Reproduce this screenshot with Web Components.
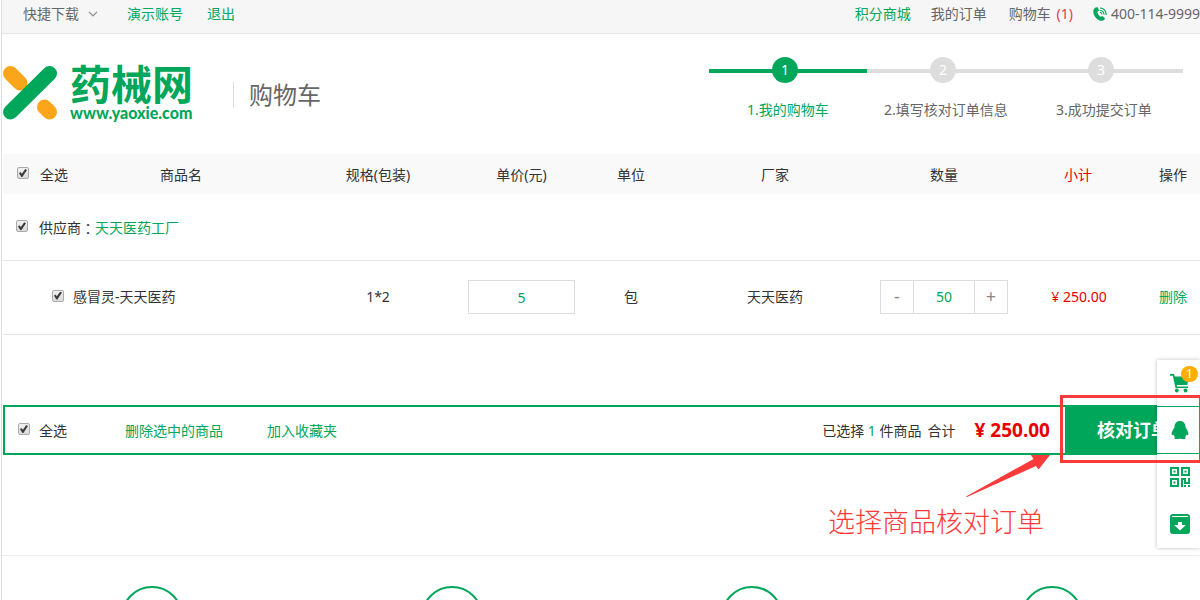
<!DOCTYPE html>
<html lang="zh-CN">
<head>
<meta charset="utf-8">
<title>购物车 - 药械网</title>
<style>
  html { --green: #00a65a; --red: #e60000; --line: #e6e6e6; --mark: #fb3a3a; }
  body {
    margin: 0; background: #fff; color: #333;
    font: 14px/20px "Noto Sans", "Noto Sans CJK SC", sans-serif;
  }
</style>
</head>
<body>
<shop-page>
  <top-bar></top-bar>
  <page-header>
    <step-tracker>
      <step-item index="1" active>1.我的购物车</step-item>
      <step-item index="2">2.填写核对订单信息</step-item>
      <step-item index="3">3.成功提交订单</step-item>
    </step-tracker>
  </page-header>
  <cart-table></cart-table>
  <checkout-bar></checkout-bar>
  <service-row></service-row>
  <side-rail slot="overlay"></side-rail>
  <guide-mark slot="overlay">选择商品核对订单</guide-mark>
</shop-page>

<script>
const base = `
  :host, *, *::before, *::after { box-sizing: border-box; }
  a { color: var(--green); text-decoration: none; }
  button, input { font: inherit; margin: 0; }
  input[type=checkbox] {
    appearance: none; flex: none; width: 12px; height: 12px; margin: 0 0 3px;
    border: 1px solid #aaa; border-radius: 2px;
    background: linear-gradient(#f2f2f2, #dadada); display: inline-grid; place-items: center;
  }
  input[type=checkbox]:checked::after {
    content: ""; width: 8px; height: 8px; background: #3c3c3c;
    clip-path: polygon(0 52%, 16% 38%, 36% 58%, 78% 0, 100% 12%, 42% 100%, 30% 100%);
  }
`;
function define(name, css, html, setup) {
  const template = document.createElement('template');
  template.innerHTML = `<style>${base}${css}</style>${html}`;
  customElements.define(name, class extends HTMLElement {
    constructor() {
      super();
      this.attachShadow({ mode: 'open' }).append(template.content.cloneNode(true));
    }
    connectedCallback() { if (setup) setup(this, this.shadowRoot); }
  });
}

define('shop-page', `
  :host { display: block; position: relative; height: 100vh; overflow: hidden; margin-left: 1px; border-left: 1px solid #e0e0e0; }
`, `<main><slot></slot></main><slot name="overlay"></slot>`);

define('top-bar', `
  :host { display: block; background: #f6f6f6; border-bottom: 1px solid var(--line); }
  nav { display: flex; height: 33px; padding: 0 0 5px 21px; align-items: center; white-space: nowrap; color: #666; }
  a.plain { color: #666; }
  .menu { display: flex; align-items: center; gap: 9px; margin-right: 29px; background: none; border: 0; padding: 0; color: #666; }
  .out { margin-left: 24px; }
  .right { margin-left: auto; display: flex; align-items: center; gap: 20px; }
  .cart { margin-left: 2px; }
  .count { margin-left: 2px; color: #e8394a; }
  .tel { display: flex; align-items: center; gap: 4px; }
`, `
  <nav>
    <button class="menu" type="button">快捷下载
      <svg width="10" height="6" viewBox="0 0 10 6" fill="none" stroke="#888" stroke-width="1.2"><path d="M1 .8 5 4.8 9 .8"/></svg>
    </button>
    <a href="#account">演示账号</a>
    <a class="out" href="#logout">退出</a>
    <div class="right">
      <a href="#points">积分商城</a>
      <a class="plain" href="#orders">我的订单</a>
      <a class="plain cart" href="#cart">购物车 <span class="count">(1)</span></a>
      <span class="tel">
        <svg width="14" height="14" viewBox="0 0 14 14"><path fill="#00a65a" d="M2.6.5 4.8.2 6 3.6 4.4 5C4.8 7 6 8.800 7.600 9.800L9.400 8.900 12 11.200 11.200 13C9.500 14 7.800 14 6.200 13.200 2.800 11.400.4 8 .3 4.400.3 2.600 1.200 1.200 2.600.5Z"/><g fill="none" stroke="#00a65a" stroke-width="1.100"><path d="M7 1A6 6 0 0 1 13 8M7 3.200A4 4 0 0 1 10.900 7.600M6.900 5.300A2 2 0 0 1 8.800 7.400"/></g></svg>
        400-114-9999
      </span>
    </div>
  </nav>
`);

define('page-header', `
  :host { display: flex; height: 120px; align-items: flex-start; justify-content: space-between; padding: 0 17px 0 1px; white-space: nowrap; }
  .brand { display: flex; align-items: flex-start; padding-top: 32px; color: var(--green); }
  .words { display: block; margin-left: 13px; width: 123px; }
  .name { display: block; font-size: 41px; line-height: 36px; font-weight: 700; }
  .url { display: block; font: 900 16px/22px Lato, sans-serif; }
  h1 { margin: 16px 0 0 40px; padding-left: 15px; font-size: 24px; line-height: 26px; font-weight: 400; color: #666; border-left: 1px solid #ddd; }
`, `
  <div class="brand">
    <svg width="54" height="54" viewBox="0 0 54 54" fill="none" stroke-linecap="round" stroke-width="15">
      <path stroke="#faa51a" d="M7.500 7.500 17 17M41.500 41 46.500 46"/>
      <path stroke="#00a65a" d="M46.500 7.500 7.500 46"/>
    </svg>
    <a class="words" href="#home"><span class="name">药械网</span><span class="url">www.yaoxie.com</span></a>
    <h1>购物车</h1>
  </div>
  <slot></slot>
`);

define('step-tracker', `:host { display: flex; padding-top: 23px; }`, `<slot></slot>`);

define('step-item', `
  :host { display: block; width: 158px; text-align: center; color: #666; --tone: #ddd; }
  :host([active]) { color: var(--green); --tone: var(--green); }
  .rail { display: grid; place-items: center; padding-right: 6px; background: linear-gradient(var(--tone), var(--tone)) 0 12px / 100% 4px no-repeat; }
  .dot { width: 26px; height: 26px; border-radius: 50%; background: var(--tone); color: #fff; line-height: 26px; }
  .label { margin-top: 17px; }
`, `<div class="rail"><span class="dot"></span></div><div class="label"><slot></slot></div>`,
  (host, root) => { root.querySelector('.dot').textContent = host.getAttribute('index'); });

define('qty-stepper', `
  :host { display: inline-flex; height: 34px; border: 1px solid #ddd; vertical-align: middle; }
  button { width: 32px; padding: 0 0 2px; border: 0; background: #fff; color: #888; font-size: 18px; line-height: 20px; }
  input { width: 62px; padding: 0; border: 0; border-inline: 1px solid #ddd; text-align: center; color: var(--green); outline: 0; }
`, `<button type="button" aria-label="减少">-</button><input aria-label="数量" value="50"><button type="button" aria-label="增加">+</button>`);

define('cart-table', `
  :host { display: block; padding-left: 1px; }
  table { width: 100%; table-layout: fixed; border-collapse: collapse; }
  th, td { padding: 0; text-align: center; font-weight: 400; white-space: nowrap; }
  thead { background: #f9f9f9; }
  thead th { height: 40px; padding-top: 1px; }
  .left { text-align: left; }
  label, .line { display: flex; align-items: center; }
  .all { padding-left: 14px; } .all label { gap: 11px; }
  .supplier { height: 66px; padding: 2px 0 0 13px; border-bottom: 1px solid var(--line); }
  .supplier label { gap: 11px; }
  .colon { font-family: "Noto Sans CJK TC", sans-serif; line-height: 20px; }
  .item td { height: 74px; border-bottom: 1px solid var(--line); }
  .item .name { padding-left: 49px; } .name label { gap: 9px; }
  .red { color: var(--red); }
  .item .red { padding-left: 2px; }
  .price { width: 107px; height: 34px; padding: 0; border: 1px solid #ddd; text-align: center; color: var(--green); vertical-align: middle; outline: 0; }
`, `
  <table>
    <colgroup>
      <col style="width:56px"><col style="width:244px"><col style="width:150px"><col style="width:137px">
      <col style="width:82px"><col style="width:206px"><col style="width:132px"><col style="width:136px"><col style="width:54px">
    </colgroup>
    <thead>
      <tr>
        <th class="left all"><label><input type="checkbox" checked>全选</label></th>
        <th>商品名</th><th>规格(包装)</th><th>单价(元)</th><th>单位</th><th>厂家</th><th>数量</th><th class="red">小计</th><th>操作</th>
      </tr>
    </thead>
    <tbody>
      <tr><td class="left supplier" colspan="9"><div class="line"><label><input type="checkbox" checked>供应商</label><span class="colon" lang="zh-TW">：</span><a href="#supplier">天天医药工厂</a></div></td></tr>
      <tr class="item">
        <td class="left name" colspan="2"><label><input type="checkbox" checked>感冒灵-天天医药</label></td>
        <td>1*2</td>
        <td><input class="price" aria-label="单价" value="5"></td>
        <td>包</td><td>天天医药</td>
        <td><qty-stepper></qty-stepper></td>
        <td class="red">¥ 250.00</td>
        <td><a href="#remove">删除</a></td>
      </tr>
    </tbody>
  </table>
`);

define('checkout-bar', `
  :host { display: flex; height: 50px; margin: 70px 0 0 1px; border: 2px solid var(--green); border-right: 0; align-items: center; white-space: nowrap; line-height: 22px; }
  label, a, .sum { padding-top: 2px; }
  label { display: flex; align-items: center; gap: 9px; padding-left: 13px; margin-right: 58px; }
  .fav { margin-left: 44px; }
  .sum { margin-left: auto; }
  b { font-weight: 400; color: var(--green); }
  .gap { margin-left: 6px; }
  strong { margin: 0 15px 0 19px; font-size: 19px; color: var(--red); }
  button { align-self: stretch; width: 135px; padding: 0 0 0 32px; border: 0; background: var(--green); color: #fff; font-size: 18px; font-weight: 700; text-align: left; }
`, `
  <label><input type="checkbox" checked>全选</label>
  <a href="#remove-selected">删除选中的商品</a>
  <a class="fav" href="#favorite">加入收藏夹</a>
  <span class="sum">已选择 <b>1</b> 件商品<span class="gap">合计</span></span>
  <strong>¥ 250.00</strong>
  <button type="button">核对订单</button>
`);

define('service-row', `
  :host { display: grid; grid-template-columns: repeat(4, 1fr); justify-items: center; margin: 100px -2px 0 0; padding-top: 30px; border-top: 1px solid #ececec; }
  i { width: 62px; height: 62px; border: 2px solid var(--green); border-radius: 50%; }
`, `<i></i><i></i><i></i><i></i>`);

define('side-rail', `
  :host { display: block; position: absolute; top: 360px; right: 0; width: 43px; background: #fff; box-shadow: 0 0 4px rgba(0,0,0,.25); }
  a { display: grid; place-items: center; height: 47px; padding-bottom: 2px; position: relative; }
  .chat { height: 48px; margin-top: -1px; padding-bottom: 0; border: solid var(--green); border-width: 1px 0; }
  svg { display: block; margin-right: -3px; }
  .badge { position: absolute; top: 6px; right: 2px; width: 17px; height: 16px; border-radius: 8px; background: #ffae00; color: #fff; font-size: 12px; line-height: 16px; text-align: center; }
`, `
  <a href="#cart" aria-label="购物车">
    <svg width="20" height="20" viewBox="0 0 20 20" fill="#00a65a"><path d="M0 1h4l.8 2.500H19l-1.700 8.500H6.700l.4 1.500H18V15H5.500L2.800 2.800H0Z"/><circle cx="6.800" cy="17.500" r="1.900"/><circle cx="15.500" cy="17.500" r="1.900"/></svg>
    <span class="badge">1</span>
  </a>
  <a class="chat" href="#chat" aria-label="客服">
    <svg width="20" height="20" viewBox="0 0 20 20" fill="#00a65a"><path d="M10 1C13.500 1 15.500 3.500 15.600 7.500 17.500 10 18.800 13 18.300 14.800 18 15.500 17 15 16.500 14.500 16.300 15.500 15.800 16.500 15 17.200 16.300 17.800 16 19 14 19H11L10 18.500 9 19H6C4 19 3.700 17.800 5 17.200 4.200 16.500 3.700 15.500 3.500 14.500 3 15 2 15.500 1.700 14.800 1.200 13 2.500 10 4.400 7.500 4.500 3.500 6.500 1 10 1Z"/></svg>
  </a>
  <a href="#qrcode" aria-label="二维码">
    <svg width="20" height="20" viewBox="0 0 20 20" fill="none" stroke="#00a65a" stroke-width="2"><path d="M1 1h7v7H1ZM12 1h7v7h-7ZM1 12h7v7H1ZM12 20v-8h3v4h4v-5"/><path fill="#00a65a" stroke="none" d="M3.500 3.500h2v2h-2ZM14.500 3.500h2v2h-2ZM3.500 14.500h2v2h-2ZM14 18h2v2h-2ZM18 18h2v2h-2Z"/></svg>
  </a>
  <a href="#download" aria-label="下载">
    <svg width="20" height="20" viewBox="0 0 20 20"><path fill="#00a65a" d="M3 0h14q3 0 3 3v14q0 3-3 3H3q-3 0-3-3V3Q0 0 3 0Z"/><path stroke="#fff" d="M2 2.500h16"/><path fill="#fff" d="M8 8h4v3h4l-6 5.500L4 11h4Z"/></svg>
  </a>
`);

define('guide-mark', `
  :host { display: block; position: absolute; top: 395px; right: 0; width: 372px; color: var(--mark); pointer-events: none; }
  .frame { width: 140px; height: 68px; margin-left: auto; border: 3px solid var(--mark); border-right-width: 1px; }
  .arrow { display: block; margin: -8px 0 0 138px; }
  p { margin: 4px 0 0; font: 300 27px/36px "Noto Sans CJK SC", sans-serif; white-space: nowrap; }
`, `
  <div class="frame"></div>
  <svg class="arrow" width="86" height="44" viewBox="0 0 86 44" fill="#fb3a3a"><path d="M0 41.500 67.500 4 65 0H84L72.500 14.500 70 11 1 42Z"/></svg>
  <p><slot></slot></p>
`);
</script>
</body>
</html>
